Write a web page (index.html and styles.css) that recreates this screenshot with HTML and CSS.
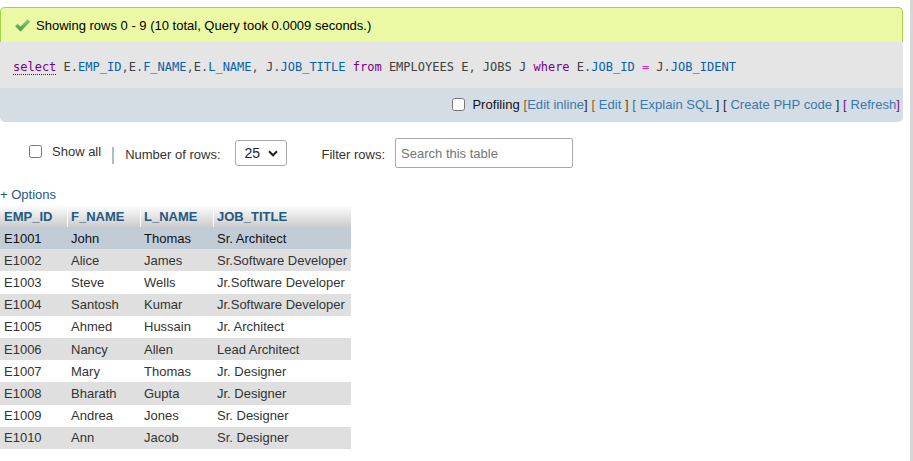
FILE: index.html
```html
<!DOCTYPE html>
<html>
<head>
<meta charset="utf-8">
<link rel="stylesheet" href="styles.css">
</head>
<body>
<div class="page">
  <div class="main">
    <div class="result">
      <div class="success">
        <svg class="check" width="15" height="13" viewBox="0 0 15 13">
          <defs>
            <linearGradient id="g" x1="0" y1="0" x2="0" y2="1">
              <stop offset="0" stop-color="#8fcf7f"/>
              <stop offset="1" stop-color="#3f9a3a"/>
            </linearGradient>
          </defs>
          <path d="M0.5 7.2 L2.6 5.2 L5.6 8 L12.6 0.8 L14.6 2.8 L5.6 12.2 Z" fill="url(#g)" stroke="#5a9a4a" stroke-width="0.6"/>
        </svg>
        <span>Showing rows 0 - 9 (10 total, Query took 0.0009 seconds.)</span>
      </div>
      <div class="sql">
        <code><span class="kw kw-u">select</span> <span class="tb">E</span><span class="pt">.</span><span class="id">EMP_ID</span><span class="pt">,</span><span class="tb">E</span><span class="pt">.</span><span class="id">F_NAME</span><span class="pt">,</span><span class="tb">E</span><span class="pt">.</span><span class="id">L_NAME</span><span class="pt">,</span> <span class="tb">J</span><span class="pt">.</span><span class="id">JOB_TITLE</span> <span class="kw">from</span> <span class="tb">EMPLOYEES</span> <span class="tb">E</span><span class="pt">,</span> <span class="tb">JOBS</span> <span class="tb">J</span> <span class="kw">where</span> <span class="tb">E</span><span class="pt">.</span><span class="id">JOB_ID</span> <span class="op">=</span> <span class="tb">J</span><span class="pt">.</span><span class="id">JOB_IDENT</span></code>
      </div>
      <div class="tools">
        <input type="checkbox" class="cb"><span class="links">Profiling <span class="br b1">[</span><a>Edit inline</a><span class="br b2">]</span> <span class="br b1">[</span> <a>Edit</a> <span class="br b3">]</span> <span class="br b4">[</span> <a>Explain SQL</a> <span class="br b2">]</span> <span class="br b2">[</span> <a>Create PHP code</a> <span class="br b2">]</span> <span class="br b5">[</span> <a>Refresh</a><span class="br b5">]</span></span>
      </div>
    </div>

    <div class="nav">
      <label class="showall"><input type="checkbox" class="cb"> Show all</label>
      <span class="sep"></span>
      <span class="lbl">Number of rows:</span>
      <div class="select"><span>25</span>
        <svg width="10" height="7" viewBox="0 0 10 7"><path d="M1 1.3 L5 5.3 L9 1.3" fill="none" stroke="#222" stroke-width="2"/></svg>
      </div>
      <span class="lbl filter">Filter rows:</span>
      <div class="search">Search this table</div>
    </div>

    <a class="options">+ Options</a>

    <table class="data">
      <thead>
        <tr><th class="c1">EMP_ID</th><th class="c2">F_NAME</th><th class="c3">L_NAME</th><th class="c4">JOB_TITLE</th></tr>
      </thead>
      <tbody>
        <tr class="hover"><td>E1001</td><td>John</td><td>Thomas</td><td>Sr. Architect</td></tr>
        <tr class="even"><td>E1002</td><td>Alice</td><td>James</td><td>Sr.Software Developer</td></tr>
        <tr><td>E1003</td><td>Steve</td><td>Wells</td><td>Jr.Software Developer</td></tr>
        <tr class="even"><td>E1004</td><td>Santosh</td><td>Kumar</td><td>Jr.Software Developer</td></tr>
        <tr><td>E1005</td><td>Ahmed</td><td>Hussain</td><td>Jr. Architect</td></tr>
        <tr class="even"><td>E1006</td><td>Nancy</td><td>Allen</td><td>Lead Architect</td></tr>
        <tr><td>E1007</td><td>Mary</td><td>Thomas</td><td>Jr. Designer</td></tr>
        <tr class="even"><td>E1008</td><td>Bharath</td><td>Gupta</td><td>Jr. Designer</td></tr>
        <tr><td>E1009</td><td>Andrea</td><td>Jones</td><td>Sr. Designer</td></tr>
        <tr class="even"><td>E1010</td><td>Ann</td><td>Jacob</td><td>Sr. Designer</td></tr>
      </tbody>
    </table>
  </div>
  <div class="splitter"></div>
</div>
</body>
</html>
```

FILE: styles.css
```css
html, body {
  margin: 0;
  padding: 0;
  background: #fff;
}
body {
  font-family: "Liberation Sans", Arial, sans-serif;
  font-size: 13px;
  color: #333;
}
.page {
  display: flex;
  height: 461px;
  overflow: hidden;
}
.main {
  width: 910px;
  padding-top: 7px;
}
.splitter {
  width: 3px;
  background: #d6d6d6;
}
.result {
  width: 903px;
}
.success {
  box-sizing: border-box;
  height: 35px;
  background: #ebf8a4;
  border: 1px solid #a2d246;
  border-bottom: none;
  border-radius: 5px 5px 0 0;
  display: flex;
  align-items: center;
  padding-left: 14px;
  color: #000;
  font-size: 13px;
}
.check {
  margin-right: 6px;
}
.sql {
  box-sizing: border-box;
  height: 46px;
  background: #e5e5e5;
  display: flex;
  align-items: center;
  padding-left: 13px;
  padding-top: 3px;
}
.sql code {
  font-family: "DejaVu Sans Mono", monospace;
  font-size: 12px;
  color: #444;
}
.kw { color: #770088; }
.kw-u { border-bottom: 1px dotted #333; }
.tb { color: #404040; }
.pt { color: #505050; }
.id { color: #0b5fa8; }
.op { color: #e020e0; }
.tools {
  box-sizing: border-box;
  height: 34px;
  background: #d5dde4;
  border-radius: 0 0 5px 5px;
  display: flex;
  align-items: center;
  justify-content: flex-end;
  padding-right: 3px;
  padding-bottom: 2px;
  font-size: 13px;
  white-space: pre;
}
.tools .cb { margin-right: 7px; }
.links { color: #111; letter-spacing: 0.05px; }
.tools a { color: #3a78ae; }
.cb {
  width: 13px;
  height: 13px;
  margin: 0 6px 0 0;
}
.br { color: #222; }
.b1 { color: #9c5f20; }
.b2 { color: #2a2a3a; }
.b3 { color: #6b3d10; }
.b4 { color: #3f6c9e; }
.b5 { color: #6a1a7a; }
.nav {
  display: flex;
  align-items: center;
  height: 30px;
  margin-top: 16px;
  padding-left: 29px;
  font-size: 13px;
  color: #333;
}
.showall {
  display: flex;
  align-items: center;
  margin-top: -4px;
}
.showall .cb { margin-right: 10px; }
.sep {
  width: 2px;
  height: 17px;
  background: #aebdcc;
  margin: 4px 11px 0 11px;
}
.lbl { margin-top: 2px; }
.select {
  box-sizing: border-box;
  width: 52px;
  height: 26px;
  border: 1px solid #a9a9a9;
  border-radius: 3px;
  margin-left: 14px;
  display: flex;
  align-items: center;
  justify-content: space-between;
  padding: 0 8px 0 9px;
  color: #222;
  font-size: 14px;
}
.filter { margin-left: 35px; }
.search {
  box-sizing: border-box;
  width: 178px;
  height: 30px;
  border: 1px solid #a9a9a9;
  border-radius: 2px;
  margin-left: 10px;
  padding-left: 5px;
  display: flex;
  align-items: center;
  color: #757575;
  font-size: 13px;
}
.options {
  display: block;
  margin-top: 19px;
  color: #235a81;
  font-size: 13px;
  line-height: 16px;
}
.data {
  border-collapse: separate;
  border-spacing: 0;
  margin-top: 2px;
}
.data th {
  height: 22px;
  padding: 0 4px 0 3px;
  text-align: left;
  font-weight: bold;
  color: #235a81;
  background: linear-gradient(#ffffff, #cccccc);
  border-left: 1px solid #fff;
  font-size: 13px;
}
.data td {
  height: 22.2px;
  padding: 0 4px 0 3px;
  color: #333;
  font-size: 13px;
  white-space: nowrap;
  border-left: 1px solid transparent;
}
.data th:first-child, .data td:first-child {
  border-left: none;
  padding-left: 4px;
}
.data .c1 { width: 59px; }
.data .c2 { width: 65px; }
.data .c3 { width: 65px; }
.data .c4 { width: 130px; }
.data tr.even td { background: #dfdfdf; }
.data tr.hover td { background: #c2ccd7; color: #111; }
```
